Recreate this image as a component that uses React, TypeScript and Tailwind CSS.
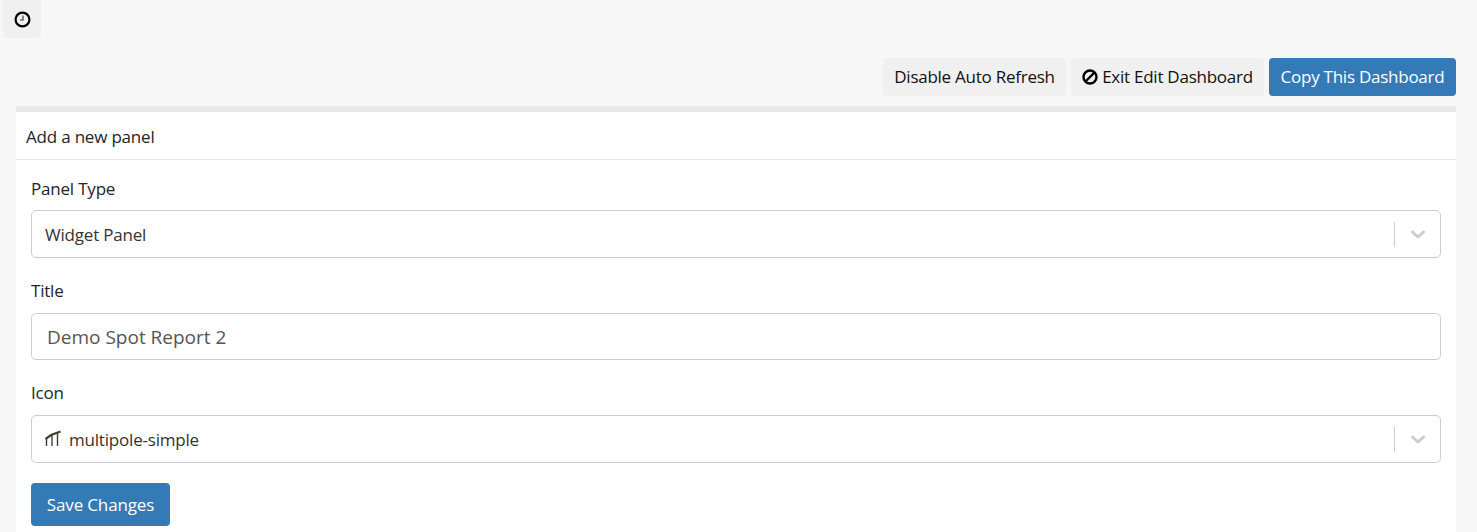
import React from "react";

const font = { fontFamily: '"Open Sans", "Noto Sans", sans-serif' };

function Chevron() {
  return (
    <svg width="20" height="20" viewBox="0 0 20 20" fill="none" stroke="#cccccc" strokeWidth="3" strokeLinecap="round" strokeLinejoin="round">
      <path d="M4.5 8 L10 13 L15.5 8" />
    </svg>
  );
}

function Select({ children }: { children: React.ReactNode }) {
  return (
    <div className="flex h-[48px] items-center rounded-[5px] border border-[#cccccc] bg-white pl-[13px]">
      <div className="flex flex-1 items-center gap-[8px] pt-[1px] text-[17px] tracking-[-0.2px] text-[#333333]">{children}</div>
      <div className="h-[25px] w-px bg-[#cccccc]" />
      <div className="flex w-[45px] items-center justify-center">
        <Chevron />
      </div>
    </div>
  );
}

function PoleIcon() {
  return (
    <svg width="16" height="17" viewBox="0 0 16 17" fill="none" className="mb-[2px]">
      <path d="M1.5 8 V16 M7 5 V16 M12.5 2 V16" stroke="#3f3f3f" strokeWidth="1.4" />
      <path d="M0.5 9 L6 5 L15.5 1.5" stroke="#4a3d30" strokeWidth="2.2" />
    </svg>
  );
}

export default function App() {
  return (
    <div className="min-h-[532px] bg-[#f7f7f7] text-[#212529]" style={font}>
      <div className="pl-[3px]">
        <button className="flex h-[38px] w-[38px] items-center justify-center rounded-b-[4px] bg-[#f0f0f0]">
          <svg width="17" height="17" viewBox="0 0 17 17" fill="none" stroke="#000" strokeWidth="2.2">
            <circle cx="8.5" cy="8.5" r="6.9" />
            <path d="M9 4.5 V9 H6" strokeWidth="1.1" stroke="#333" />
          </svg>
        </button>
      </div>
      <div className="mt-[20px] flex justify-end gap-[5px] pr-[21px] text-[17px] tracking-[-0.25px]">
        <button className="h-[38px] w-[183px] rounded-[4px] bg-[#f0f0f0] text-[#111111]">Disable Auto Refresh</button>
        <button className="flex h-[38px] w-[193px] items-center justify-center gap-[4px] rounded-[4px] bg-[#f0f0f0] text-[#111111]">
          <svg width="16" height="16" viewBox="0 0 16 16" fill="none" stroke="#000" strokeWidth="2.4">
            <circle cx="8" cy="8" r="6.5" />
            <path d="M3.5 12.5 L12.5 3.5" />
          </svg>
          Exit Edit Dashboard
        </button>
        <button className="h-[38px] w-[187px] rounded-[4px] bg-[#337ab7] text-white">Copy This Dashboard</button>
      </div>
      <div className="mx-[16px] mr-[21px] mt-[10px] border-t-[6px] border-[#e5e9ec] bg-white pb-[6px]">
        <div className="flex h-[48px] items-center border-b border-[#e7e7e7] pl-[10px] pt-[2px] text-[17px] tracking-[-0.2px]">
          Add a new panel
        </div>
        <div className="px-[15px] pt-[17px]">
          <div className="mb-[9px] h-[24px] text-[17px] leading-[24px] tracking-[-0.2px]">Panel Type</div>
          <Select>Widget Panel</Select>
          <div className="mb-[10px] mt-[21px] h-[24px] text-[17px] leading-[24px] tracking-[-0.2px]">Title</div>
          <div className="flex h-[47px] items-center rounded-[5px] border border-[#cccccc] bg-white pl-[15px] pt-[2px] text-[19px] text-[#555555]">
            Demo Spot Report 2
          </div>
          <div className="mb-[10px] mt-[21px] h-[24px] text-[17px] leading-[24px] tracking-[-0.2px]">Icon</div>
          <Select>
            <PoleIcon />
            multipole-simple
          </Select>
          <button className="mt-[20px] h-[43px] w-[139px] rounded-[4px] bg-[#337ab7] text-[17px] tracking-[-0.15px] text-white">
            Save Changes
          </button>
        </div>
      </div>
    </div>
  );
}
